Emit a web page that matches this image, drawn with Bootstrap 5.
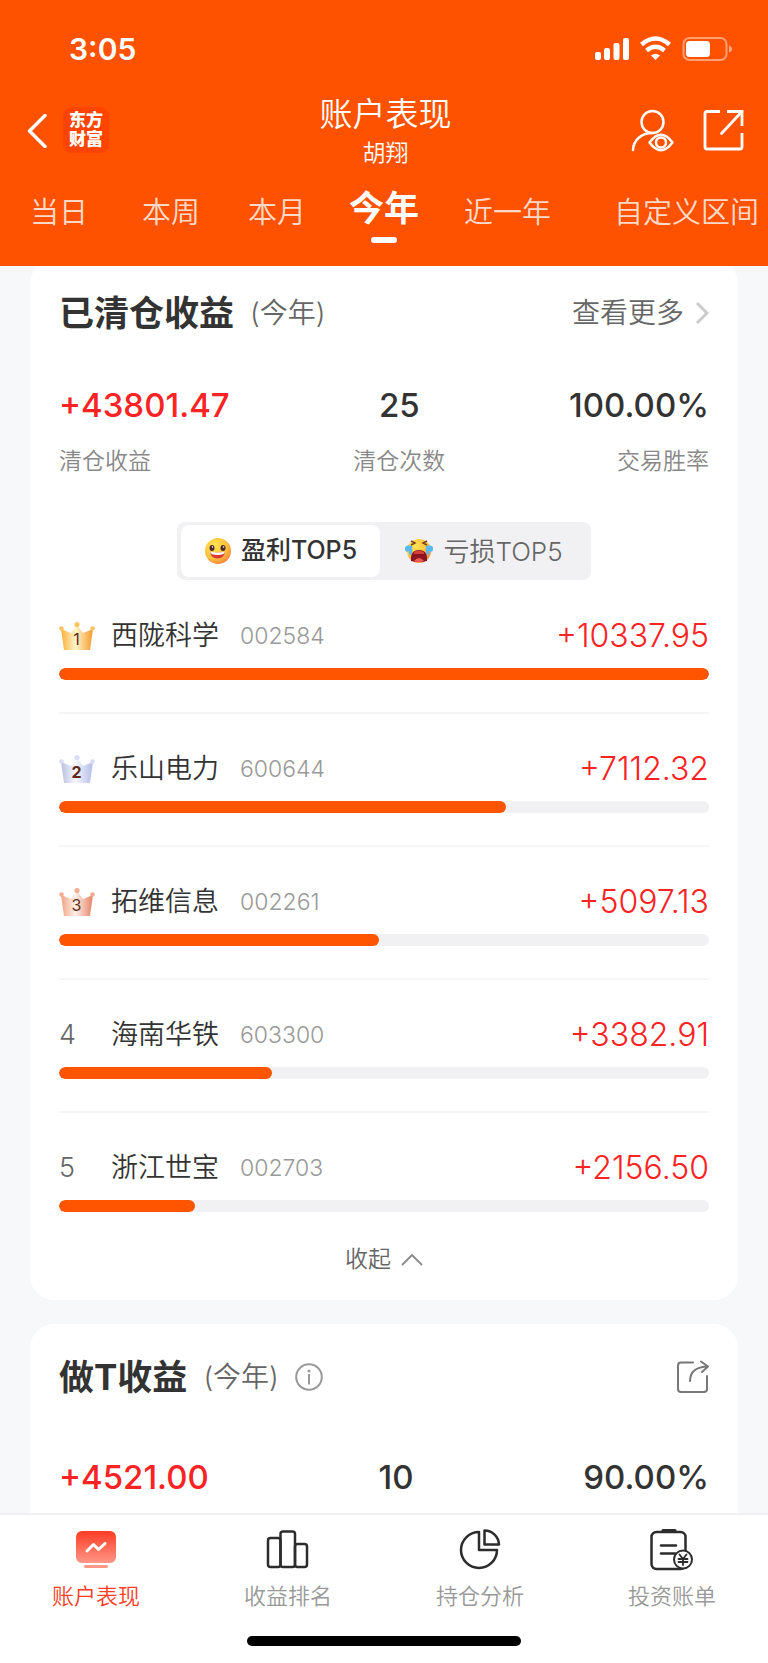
<!DOCTYPE html>
<html lang="zh-CN">
<head>
<meta charset="utf-8">
<meta name="viewport" content="width=device-width, initial-scale=1">
<title>账户表现</title>
<link href="https://cdn.jsdelivr.net/npm/bootstrap@5.3.0/dist/css/bootstrap.min.css" rel="stylesheet">
<style>
  :root { --brand: #ff5200; --gain: #fb2323; --ink: #333; --muted: #666; --track: #f1f1f4; }
  body { font-family: Inter, "Noto Sans CJK SC", sans-serif; font-weight: 350; color: var(--ink); background: #f7f8fa; height: 100vh; }
  a { color: inherit; text-decoration: none; }
  button { color: inherit; font-weight: 350; }
  svg { display: block; flex: none; }

  .app-head { background: var(--brand); z-index: 2; }
  .status-bar { height: 90px; padding: 8px 36px 0 69px; font-size: 30px; font-weight: 600; }
  .title-bar { height: 80px; padding: 0 24px 0 27px; }
  .head-side { flex: 1 1 0; height: 80px; }
  .page-title { font-size: 33px; line-height: 40px; font-weight: 350; }
  .page-owner { font-size: 23px; line-height: 38px; }
  .brand-logo { width: 46px; height: 46px; border-radius: 9px; background: #ff4400; font-size: 17px; line-height: 19px; font-weight: 900; }
  .period-tabs { display: grid; grid-template-columns: 118fr 106fr 106fr 108fr 139fr 191fr; height: 96px; font-size: 29px; line-height: 40px; }
  .period-tabs button { display: flex; flex-direction: column; align-items: center; padding: 23px 0 0; color: rgba(255,255,255,.8); white-space: nowrap; }
  .period-tabs button:last-child { padding-right: 9px; align-items: flex-end; }
  .period-tabs .active { padding-top: 18px; font-size: 35px; font-weight: 700; color: #fff; }
  .period-tabs .active::after { content: ""; width: 26px; height: 6px; margin-top: 9px; border-radius: 3px; background: #fff; }

  .content-area { padding: 0 30px; margin-top: -6px; min-height: 0; }
  .panel { background: #fff; border-radius: 24px; padding: 0 29px; flex: none; }
  .panel-head { height: 106px; }
  .panel-title { font-size: 35px; line-height: 44px; font-weight: 700; }
  .panel-note { font-size: 28px; line-height: 40px; color: var(--muted); }
  .stat-row { padding-top: 17px; }
  .stat-row-roomy { padding-top: 25px; }
  .stat-value { font-size: 33px; line-height: 44px; font-weight: 500; }
  .stat-name { font-size: 23px; line-height: 32px; color: #888; margin-top: 18px; }
  .stat-mid { min-width: 92px; }
  .gain { color: var(--gain); }

  .switcher { background: var(--track); border-radius: 8px; padding: 3px 4px; margin-top: 45px; }
  .switcher button { height: 52px; width: 199px; border-radius: 8px; font-size: 25px; gap: 9px; color: var(--muted); }
  .switcher button + button { width: 207px; font-size: 26px; }
  .switcher .active { background: #fff; color: var(--ink); font-weight: 500; }

  .rank-item { height: 133px; padding-top: 35px; border-bottom: 2px solid #f5f5f6; }
  .rank-item:first-child { height: 134px; padding-top: 36px; }
  .rank-item:last-child { height: 99px; border-bottom: 0; }
  .rank-line { height: 40px; margin-bottom: 12px; }
  .rank-no { width: 52px; font-size: 27px; color: var(--muted); font-weight: 300; }
  .rank-name { font-size: 27px; line-height: 40px; margin-right: 21px; }
  .rank-code { font-size: 23px; color: #999; font-weight: 300; }
  .rank-sum { font-size: 32px; font-weight: 300; }
  .progress { height: 12px; border-radius: 6px; background: var(--track); }
  .progress-bar { border-radius: 6px; background: #ff5500; }
  .fold { height: 88px; padding-top: 8px; font-size: 23px; gap: 10px; color: var(--muted); }

  .bottom-nav { background: #fff; border-top: 2px solid #f0f0f2; height: 150px; z-index: 2; }
  .bottom-nav a { padding-top: 13px; font-size: 22px; line-height: 32px; color: #999; gap: 8px; }
  .bottom-nav a.active { color: #fd3d27; }
  .home-bar { width: 274px; height: 10px; border-radius: 5px; background: #000; margin: 0 auto 17px; }
</style>
</head>
<body class="d-flex flex-column overflow-hidden">

<header class="app-head text-white position-relative flex-shrink-0">
  <div class="status-bar d-flex align-items-center justify-content-between">
    <span>3:05</span>
    <div class="d-flex align-items-center">
      <svg width="137" height="26" viewBox="0 0 137 26" fill="#fff" aria-hidden="true">
        <rect x="0" y="16" width="6" height="8" rx="2"/><rect x="9" y="12" width="6" height="12" rx="2"/>
        <rect x="18.500" y="7" width="6" height="17" rx="2"/><rect x="28" y="2" width="6" height="22" rx="2"/>
        <g fill="none" stroke="#fff" stroke-width="4.500"><path d="M46.500 8.500Q60.500-3.500 74.500 8.500"/><path d="M51.500 14.500Q60.500 7 69.500 14.500"/></g>
        <path d="M56 19.500Q60.500 16 65 19.500L60.500 24z"/>
        <rect x="88.500" y="2" width="43" height="22" rx="6" fill="none" stroke="#fff" stroke-opacity=".45" stroke-width="2"/>
        <rect x="91" y="5" width="24" height="16" rx="3.500"/><path d="M134 9.500q3 1 3 3.500t-3 3.500z" opacity=".5"/>
      </svg>
    </div>
  </div>
  <div class="title-bar d-flex align-items-start">
    <div class="head-side d-flex align-items-center gap-3">
      <a href="#" aria-label="返回"><svg width="20" height="36" viewBox="0 0 20 36" fill="none" stroke="#fff" stroke-width="3.500" stroke-linecap="round" stroke-linejoin="round"><path d="M18 3.500 2.500 19 18 34.500"/></svg></a>
      <a href="#" class="brand-logo d-flex flex-column align-items-center justify-content-center"><span>东方</span><span>财富</span></a>
    </div>
    <div class="text-center pt-1">
      <h1 class="page-title m-0">账户表现</h1>
      <div class="page-owner">胡翔</div>
    </div>
    <div class="head-side d-flex align-items-center justify-content-end">
      <button class="btn p-0 border-0 me-4 pe-1" aria-label="关注账户"><svg width="44" height="44" viewBox="0 0 44 44" fill="none" stroke="#fff" stroke-width="2.500" stroke-linecap="round"><circle cx="21.500" cy="14" r="11"/><path d="M2 42C2.500 32 10.500 25 21.500 25"/><path d="M18.500 34.500q11.500-15.500 23 0-11.500 15.500-23 0z" stroke-linejoin="round"/><circle cx="30" cy="34.500" r="5"/></svg></button>
      <button class="btn p-0 border-0" aria-label="分享"><svg width="41" height="42" viewBox="0 0 41 42" fill="none" stroke="#fff" stroke-width="2.800" stroke-linecap="butt"><path d="M17 2.500H4q-2 0-2 2V38q0 2 2 2h33q2 0 2-2V24"/><path d="M24 2.500H39V17"/><path d="M39 2.500 18.500 24.500" stroke-linecap="round"/></svg></button>
    </div>
  </div>
  <nav class="period-tabs">
    <button class="bg-transparent border-0">当日</button>
    <button class="bg-transparent border-0">本周</button>
    <button class="bg-transparent border-0">本月</button>
    <button class="bg-transparent border-0 active">今年</button>
    <button class="bg-transparent border-0">近一年</button>
    <button class="bg-transparent border-0">自定义区间</button>
  </nav>
</header>

<main class="content-area flex-grow-1 d-flex flex-column overflow-hidden">
  <section class="panel">
    <div class="panel-head d-flex align-items-center justify-content-between">
      <div class="d-flex align-items-center gap-3"><h2 class="panel-title m-0">已清仓收益</h2><span class="panel-note">(今年)</span></div>
      <a href="#" class="panel-note d-flex align-items-center gap-2"><span>查看更多</span><svg width="17" height="24" viewBox="0 0 17 24" fill="none" stroke="#ccc" stroke-width="3"><path d="M5 2l10 10L5 22"/></svg></a>
    </div>
    <div class="stat-row d-flex justify-content-between">
      <div><div class="stat-value gain">+43801.47</div><div class="stat-name">清仓收益</div></div>
      <div class="text-center"><div class="stat-value">25</div><div class="stat-name">清仓次数</div></div>
      <div class="text-end"><div class="stat-value">100.00%</div><div class="stat-name">交易胜率</div></div>
    </div>
    <div class="d-flex justify-content-center">
      <div class="switcher d-flex">
        <button class="border-0 active d-flex align-items-center justify-content-center">
          <svg width="28" height="28" viewBox="0 0 28 28" aria-hidden="true"><defs><radialGradient id="face" cx=".35" cy=".3" r=".8"><stop offset="0" stop-color="#ffe354"/><stop offset=".6" stop-color="#ffc23c"/><stop offset="1" stop-color="#f77b3e"/></radialGradient></defs><circle cx="14" cy="14" r="13" fill="url(#face)"/><ellipse cx="8" cy="11" rx="2.500" ry="3" fill="#4a2a2a"/><ellipse cx="19" cy="11" rx="2.500" ry="3" fill="#4a2a2a"/><circle cx="8.500" cy="10" r=".8" fill="#fff"/><circle cx="19.500" cy="10" r=".8" fill="#fff"/><path d="M6 14.500q8 2 15 0-1 7-7.500 7T6 14.500z" fill="#d83a34"/><path d="M6 14.500q8 2 15 0-.5 3.500-7.500 3.500T6 14.500z" fill="#fff"/></svg>
          <span>盈利TOP5</span>
        </button>
        <button class="border-0 bg-transparent d-flex align-items-center justify-content-center">
          <svg width="30" height="26" viewBox="0 0 30 26" aria-hidden="true"><circle cx="15" cy="13" r="12" fill="url(#face)"/><path d="M7 3l4 2-4 2M23 3l-4 2 4 2" fill="none" stroke="#7a4324" stroke-width="1.500"/><path d="M8 8Q0 6 1 12q1 3 4 1-1 4 2 4 2-3 1-9zM22 8q8-2 7 4-1 3-4 1 1 4-2 4-2-3-1-9z" fill="#58b8f4"/><path d="M7 23q-1-11 8-11t8 11q-8 2-16 0z" fill="#8c1620"/><path d="M10 14q5-3 10 0v2H10z" fill="#d2433c"/><path d="M10 23q5-6 10 0-5 2-10 0z" fill="#ef5a5a"/></svg>
          <span>亏损TOP5</span>
        </button>
      </div>
    </div>
    <ol class="list-unstyled m-0">
      <li class="rank-item">
        <div class="rank-line d-flex align-items-center">
          <span class="rank-no"><svg width="36" height="30" viewBox="0 0 36 30"><defs><linearGradient id="gold"><stop offset="0" stop-color="#f8ae35"/><stop offset=".45" stop-color="#fff5cb"/><stop offset="1" stop-color="#f59a2b"/></linearGradient></defs><path d="M2 8l10 4 6-8 6 8 10-4-3 21H5z" fill="url(#gold)"/><g fill="#fbc463"><circle cx="2.500" cy="7.500" r="2.300"/><circle cx="18" cy="3.500" r="2.600"/><circle cx="33.500" cy="7.500" r="2.300"/></g><text x="17.500" y="24" text-anchor="middle" font-size="16" font-weight="400" fill="#60301c">1</text></svg></span>
          <span class="rank-name">西陇科学</span><span class="rank-code">002584</span><span class="rank-sum gain ms-auto">+10337.95</span>
        </div>
        <div class="progress"><div class="progress-bar" style="width:100%"></div></div>
      </li>
      <li class="rank-item">
        <div class="rank-line d-flex align-items-center">
          <span class="rank-no"><svg width="36" height="30" viewBox="0 0 36 30"><defs><linearGradient id="silver"><stop offset="0" stop-color="#b9bfe0"/><stop offset=".45" stop-color="#f5f7fd"/><stop offset="1" stop-color="#b5bce8"/></linearGradient></defs><path d="M2 8l10 4 6-8 6 8 10-4-3 21H5z" fill="url(#silver)"/><g fill="#d8dcf6"><circle cx="2.500" cy="7.500" r="2.300"/><circle cx="18" cy="3.500" r="2.600"/><circle cx="33.500" cy="7.500" r="2.300"/></g><text x="17.500" y="24" text-anchor="middle" font-size="16" font-weight="700" fill="#60281c">2</text></svg></span>
          <span class="rank-name">乐山电力</span><span class="rank-code">600644</span><span class="rank-sum gain ms-auto">+7112.32</span>
        </div>
        <div class="progress"><div class="progress-bar" style="width:68.8%"></div></div>
      </li>
      <li class="rank-item">
        <div class="rank-line d-flex align-items-center">
          <span class="rank-no"><svg width="36" height="30" viewBox="0 0 36 30"><defs><linearGradient id="bronze"><stop offset="0" stop-color="#f0a283"/><stop offset=".45" stop-color="#fff0e8"/><stop offset="1" stop-color="#e58266"/></linearGradient></defs><path d="M2 8l10 4 6-8 6 8 10-4-3 21H5z" fill="url(#bronze)"/><g fill="#f3ad91"><circle cx="2.500" cy="7.500" r="2.300"/><circle cx="18" cy="3.500" r="2.600"/><circle cx="33.500" cy="7.500" r="2.300"/></g><text x="17.500" y="24" text-anchor="middle" font-size="16" font-weight="400" fill="#60301c">3</text></svg></span>
          <span class="rank-name">拓维信息</span><span class="rank-code">002261</span><span class="rank-sum gain ms-auto">+5097.13</span>
        </div>
        <div class="progress"><div class="progress-bar" style="width:49.3%"></div></div>
      </li>
      <li class="rank-item">
        <div class="rank-line d-flex align-items-center">
          <span class="rank-no">4</span>
          <span class="rank-name">海南华铁</span><span class="rank-code">603300</span><span class="rank-sum gain ms-auto">+3382.91</span>
        </div>
        <div class="progress"><div class="progress-bar" style="width:32.7%"></div></div>
      </li>
      <li class="rank-item">
        <div class="rank-line d-flex align-items-center">
          <span class="rank-no">5</span>
          <span class="rank-name">浙江世宝</span><span class="rank-code">002703</span><span class="rank-sum gain ms-auto">+2156.50</span>
        </div>
        <div class="progress"><div class="progress-bar" style="width:20.9%"></div></div>
      </li>
    </ol>
    <button class="fold w-100 bg-transparent border-0 d-flex align-items-center justify-content-center"><span>收起</span><svg width="22" height="14" viewBox="0 0 22 14" fill="none" stroke="#888" stroke-width="1.800"><path d="M1 12 11 2l10 10"/></svg></button>
  </section>

  <section class="panel mt-4">
    <div class="panel-head d-flex align-items-center justify-content-between">
      <div class="d-flex align-items-center gap-3"><h2 class="panel-title m-0">做T收益</h2><span class="panel-note">(今年)</span>
        <button class="btn p-0 border-0" aria-label="说明"><svg width="28" height="28" viewBox="0 0 28 28" fill="none" stroke="#999" stroke-width="2"><circle cx="14" cy="14" r="12.800"/><path d="M14 11v10.500"/><circle cx="14" cy="8" r="1.500" fill="#999" stroke="none"/></svg></button></div>
      <button class="btn p-0 border-0" aria-label="分享"><svg width="33" height="34" viewBox="0 0 33 34" fill="none" stroke="#777" stroke-width="2" stroke-linecap="round" stroke-linejoin="round"><path d="M17 2.500H5q-3 0-3 3V29q0 3 3 3h23q3 0 3-3V16"/><path d="M14 21Q14 7 32 6.500M25 1.500l7 5-6 5.500"/></svg></button>
    </div>
    <div class="stat-row-roomy d-flex justify-content-between pb-5">
      <div class="stat-value gain">+4521.00</div>
      <div class="stat-value stat-mid text-center">10</div>
      <div class="stat-value">90.00%</div>
    </div>
  </section>
</main>

<footer class="bottom-nav position-relative flex-shrink-0 d-flex flex-column justify-content-between">
  <nav class="row row-cols-4 g-0">
    <a href="#" class="col active d-flex flex-column align-items-center">
      <svg width="44" height="44" viewBox="0 0 44 44"><defs><linearGradient id="screen" x2="0" y2="1"><stop offset="0" stop-color="#ff3c25"/><stop offset="1" stop-color="#ff9686"/></linearGradient></defs><rect x="2" y="3" width="40" height="32" rx="6" fill="url(#screen)"/><rect x="10" y="37" width="24" height="3" rx="1.500" fill="#ff9686"/><path d="M13 23l6.500-6.500 5 5L31 15.500" fill="none" stroke="#fff" stroke-width="3" stroke-linecap="round" stroke-linejoin="round"/></svg>
      <span>账户表现</span></a>
    <a href="#" class="col d-flex flex-column align-items-center">
      <svg width="44" height="44" viewBox="0 0 44 44" fill="none" stroke="#2c2c2c" stroke-width="2.500"><rect x="2" y="10" width="12.500" height="29" rx="2.500"/><rect x="14.500" y="3.500" width="14.500" height="35.500" rx="2.500"/><rect x="29" y="16" width="12" height="23" rx="2.500"/></svg>
      <span>收益排名</span></a>
    <a href="#" class="col d-flex flex-column align-items-center">
      <svg width="44" height="44" viewBox="0 0 44 44" fill="none" stroke="#2c2c2c" stroke-width="2.500" stroke-linejoin="round"><path d="M21 4A18 18 0 1 0 39 22H21z"/><path d="M26.500 2.500V16.500H41A14.500 14.500 0 0 0 26.500 2.500z"/></svg>
      <span>持仓分析</span></a>
    <a href="#" class="col d-flex flex-column align-items-center">
      <svg width="44" height="44" viewBox="0 0 44 44" fill="none" stroke="#2c2c2c" stroke-width="2.500" stroke-linecap="round"><rect x="1.500" y="4" width="34" height="37" rx="5"/><path d="M13 2.500h12" stroke-width="3"/><path d="M11 17.500h15M11 25.500h14"/><circle cx="33" cy="31.500" r="9" fill="#fff" stroke-width="2"/><path d="M29.500 26.500l3.500 4.500 3.500-4.500M33 31v6M28.500 31h9M28.500 34h9" stroke-width="1.800"/></svg>
      <span>投资账单</span></a>
  </nav>
  <div class="home-bar"></div>
</footer>
<script src="https://cdn.jsdelivr.net/npm/bootstrap@5.3.0/dist/js/bootstrap.bundle.min.js"></script>
</body>
</html>
